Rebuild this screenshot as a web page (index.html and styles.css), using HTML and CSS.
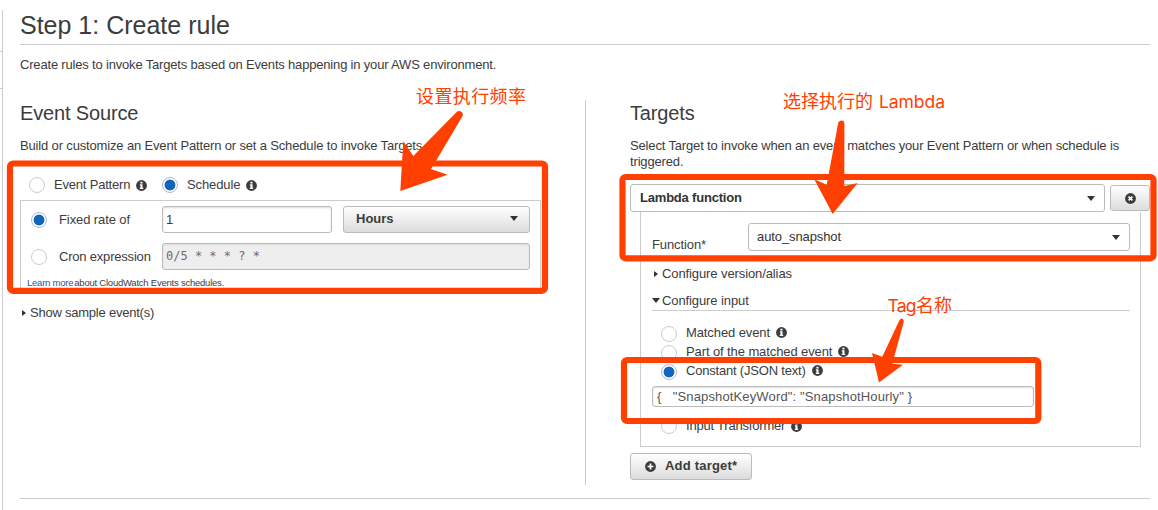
FILE: index.html
```html
<!DOCTYPE html>
<html lang="en">
<head>
<meta charset="utf-8">
<title>Create rule</title>
<link rel="stylesheet" href="styles.css">
</head>
<body>
<svg class="defs" width="0" height="0">
  <symbol id="info" viewBox="0 0 12 12"><circle cx="6" cy="6" r="5.900" fill="#3c3c3c"/><path d="M4.800 1.800h2.300v1.900H4.800zM4.200 4.700h2.900v3.800h.8v1.400H4.100V8.500h.8V6.100h-.7z" fill="#fff"/></symbol>
  <symbol id="close" viewBox="0 0 12 12"><circle cx="6" cy="6" r="5.900" fill="#3c3c3c"/><path d="M3.900 3.900l4.200 4.200M8.100 3.900L3.900 8.100" stroke="#fff" stroke-width="1.800"/></symbol>
  <symbol id="plus" viewBox="0 0 12 12"><circle cx="6" cy="6" r="5.900" fill="#3c3c3c"/><path d="M6 2.800v6.400M2.800 6h6.400" stroke="#fff" stroke-width="1.900"/></symbol>
</svg>
<div class="page">
  <aside class="rail"><i></i><i></i></aside>
  <main class="main">
    <h1>Step 1: Create rule</h1>
    <p class="intro">Create rules to invoke Targets based on Events happening in your AWS environment.</p>
    <div class="columns">
      <section class="source">
        <h2>Event Source</h2>
        <p class="desc">Build or customize an Event Pattern or set a Schedule to invoke Targets.</p>
        <div class="modes">
          <label class="mode-pattern"><i class="radio"></i><span class="tight">Event Pattern</span><svg class="ic"><use href="#info"/></svg></label>
          <label><i class="radio on"></i><span>Schedule</span><svg class="ic"><use href="#info"/></svg></label>
        </div>
        <div class="schedule">
          <div class="line">
            <label class="name"><i class="radio on"></i><span>Fixed rate of</span></label>
            <div class="input rate">1</div>
            <div class="button hours"><b>Hours</b><i class="caret"></i></div>
          </div>
          <div class="line">
            <label class="name"><i class="radio"></i><span class="tight">Cron expression</span></label>
            <div class="input cron">0/5 * * * ? *</div>
          </div>
          <div class="learn"><a>Learn more</a><span>about CloudWatch Events schedules.</span></div>
        </div>
        <div class="toggle sample"><i class="right"></i><span>Show sample event(s)</span></div>
      </section>
      <section class="targets">
        <h2>Targets</h2>
        <p class="desc two">Select Target to invoke when an event matches your Event Pattern or when schedule is<br>triggered.</p>
        <div class="target-row">
          <div class="select kind"><b class="tight">Lambda function</b><i class="caret"></i></div>
          <div class="button remove"><svg class="ic"><use href="#close"/></svg></div>
        </div>
        <div class="config">
          <div class="function"><span class="fname">Function*</span><div class="select">auto_snapshot<i class="caret"></i></div></div>
          <div class="toggle version"><i class="right"></i><span>Configure version/alias</span></div>
          <div class="toggle cinput"><i class="down"></i><span>Configure input</span></div>
          <div class="options">
            <label><i class="radio"></i><span>Matched event</span><svg class="ic"><use href="#info"/></svg></label>
            <label><i class="radio"></i><span>Part of the matched event</span><svg class="ic"><use href="#info"/></svg></label>
            <label><i class="radio on"></i><span class="tight">Constant (JSON text)</span><svg class="ic"><use href="#info"/></svg></label>
          </div>
          <div class="input json">{ &nbsp; "SnapshotKeyWord": "SnapshotHourly" }</div>
          <label class="transformer"><i class="radio"></i><span class="tight">Input Transformer</span><svg class="ic"><use href="#info"/></svg></label>
        </div>
        <div class="button add"><svg class="ic"><use href="#plus"/></svg><b>Add target*</b></div>
      </section>
    </div>
  </main>
  <svg class="notes" viewBox="0 0 1158 510">
    <g class="frames">
      <rect x="10" y="163.500" width="535" height="127.300" rx="3"/>
      <rect x="622.500" y="177" width="531" height="81.300" rx="3"/>
      <rect x="624" y="360" width="414.300" height="61" rx="3"/>
    </g>
    <g class="arrows">
      <path d="M456.700 111.900Q459 110 461.500 111.800Q463.800 113.800 462.300 116.500L436 160.700L431 169L447.700 174.700L400.300 190.900L403.300 141.300L413.300 156Z"/>
      <path d="M838.200 123Q838.800 120.500 841.300 120.500Q844.300 120.500 844.400 123.500L844.300 186L857.700 183L832.700 214L814.300 179.300L826.700 184.700Z"/>
      <path d="M899.300 320.500Q900.500 318.200 902.500 318.700Q904.200 319.500 903.700 322L892.300 363.700L903 364.700L879 382.500L872 353L882.300 356.700Z"/>
    </g>
    <text x="416" y="102.500" textLength="110">设置执行频率</text>
    <text x="783" y="108" textLength="90">选择执行的</text>
    <text class="latin" x="879" y="108" textLength="66">Lambda</text>
    <text class="latin" x="887.500" y="312" textLength="29">Tag</text>
    <text x="916" y="312" textLength="36">名称</text>
  </svg>
</div>
</body>
</html>
```
FILE: styles.css
```css
* { box-sizing: border-box; }
body { margin: 0; background: #fff; font: 13px/16px "Liberation Sans", Arial, sans-serif; color: #3c3c3c; }
h1, h2, p { margin: 0; font-weight: normal; white-space: nowrap; }
i { font-style: normal; }
span, b { white-space: nowrap; }
span { letter-spacing: -0.1px; }
.tight { letter-spacing: -0.2px; }
.defs { position: absolute; }
.page { position: relative; display: flex; width: 1158px; height: 510px; overflow: hidden; }
.rail { width: 3px; height: 500px; margin-top: 10px; border-right: 1px solid #ccc; padding-top: 41px; }
.rail i { display: block; height: 1px; background: #ccc; margin-bottom: 36px; }
.main { width: 1130px; height: 499px; margin-left: 17px; border-bottom: 1px solid #ccc; }
h1 { height: 45px; padding-top: 11px; border-bottom: 1px solid #ccc; font-size: 25px; line-height: 29px; }
.intro { height: 55px; padding-top: 12px; letter-spacing: -0.180px; }
.columns { display: grid; grid-template-columns: 566px 520px; column-gap: 44px; height: 385px; }
.source { border-right: 1px solid #ccc; }
h2 { height: 26px; font-size: 20px; line-height: 26px; letter-spacing: -0.150px; }
.desc { padding-top: 12px; letter-spacing: -0.155px; }
.modes { display: flex; height: 46px; align-items: flex-end; padding: 0 0 7px 9px; }
label { display: flex; align-items: center; height: 16px; }
.radio { flex: none; width: 16px; height: 16px; margin-right: 9px; border: 1px solid #ccc; border-radius: 50%; background: #fff; }
.radio.on { border-color: #afbdd0; background: radial-gradient(circle, #1166bb 5px, #fff 5.800px); }
.ic { flex: none; width: 11px; height: 11px; margin-left: 6px; }
.mode-pattern { width: 133px; }
.schedule { width: 521px; height: 89px; border: 1px solid #ccc; padding: 5px 10px 0; }
.line { display: flex; height: 27px; margin-bottom: 10px; }
.name { width: 131px; height: 27px; }
.name .radio { margin-right: 12px; }
.input { border: 1px solid #bbb; border-radius: 3px; padding: 0 4px; line-height: 25px; box-shadow: inset 0 1px 2px #ddd; background: #fff; }
.rate { width: 170px; margin-right: 11px; padding-left: 3px; }
.cron { width: 368px; background: #eee; color: #6c6c6c; font: 12px/25px "DejaVu Sans Mono", monospace; padding-left: 3px; }
.button { display: flex; align-items: center; border: 1px solid #bbb; border-radius: 3px; background: linear-gradient(#fff, #dcdcdc); }
.hours { width: 187px; padding: 0 11px 2px 12px; justify-content: space-between; }
.caret { width: 0; border: 4.500px solid transparent; border-top: 5px solid #333; border-bottom: 0; }
.learn { margin: -3px 0 0 -4px; font-size: 9.500px; line-height: 12px; display: flex; letter-spacing: -0.230px; }
.learn span { letter-spacing: inherit; }
.learn a { color: #1155bb; margin-right: 1px; }
.toggle { display: flex; align-items: center; height: 16px; }
.right { border: 3.500px solid transparent; border-left: 4px solid #333; border-right: 0; margin: 0 4px 0 2px; }
.down { border: 4.500px solid transparent; border-top: 5px solid #333; border-bottom: 0; margin-right: 2px; }
.sample { margin-top: 16px; }
.sample span { letter-spacing: -0.230px; }
.two { height: 58px; }
.target-row { display: flex; gap: 5px; height: 28px; align-items: center; }
.select { display: flex; justify-content: space-between; align-items: center; border: 1px solid #bbb; border-radius: 3px; height: 28px; background: #fff; padding: 0 9px 0 8px; color: #333; letter-spacing: -0.100px; }
.kind { width: 475px; padding-left: 9px; }
.remove { width: 40px; height: 26px; justify-content: center; }
.remove .ic { margin: 0; }
.config { width: 501px; height: 235px; margin-left: 10px; border: 1px solid #ccc; border-top: 0; padding: 11px 10px 0 11px; }
.function { display: flex; height: 28px; }
.fname { width: 96px; padding-top: 14px; }
.function .select { width: 382px; }
.version { margin-top: 15px; }
.cinput { height: 19px; margin-top: 10px; padding-bottom: 1px; border-bottom: 1px solid #ccc; }
.options { padding: 12px 0 0 9px; }
.options label { height: 19px; }
.options .radio { position: relative; top: 1px; }
.json { width: 382px; height: 21px; margin-top: 6px; line-height: 19px; color: #555; letter-spacing: 0.140px; }
.transformer { margin: 11px 0 0 9px; }
.add { width: 122px; height: 27px; margin-top: 6px; padding: 0 0 1px 14px; }
.add .ic { margin: 0 9px 0 0; }
.add b { letter-spacing: 0.200px; }
.notes { position: absolute; left: 0; top: 0; width: 1158px; height: 510px; }
.frames { fill: none; stroke: #ff4000; stroke-width: 6.200; }
.arrows, .notes text { fill: #ff4000; }
.notes text { font: 18px "Noto Sans CJK SC", sans-serif; }
.notes .latin { font: 17.500px "Inter", "Roboto", sans-serif; }
```
